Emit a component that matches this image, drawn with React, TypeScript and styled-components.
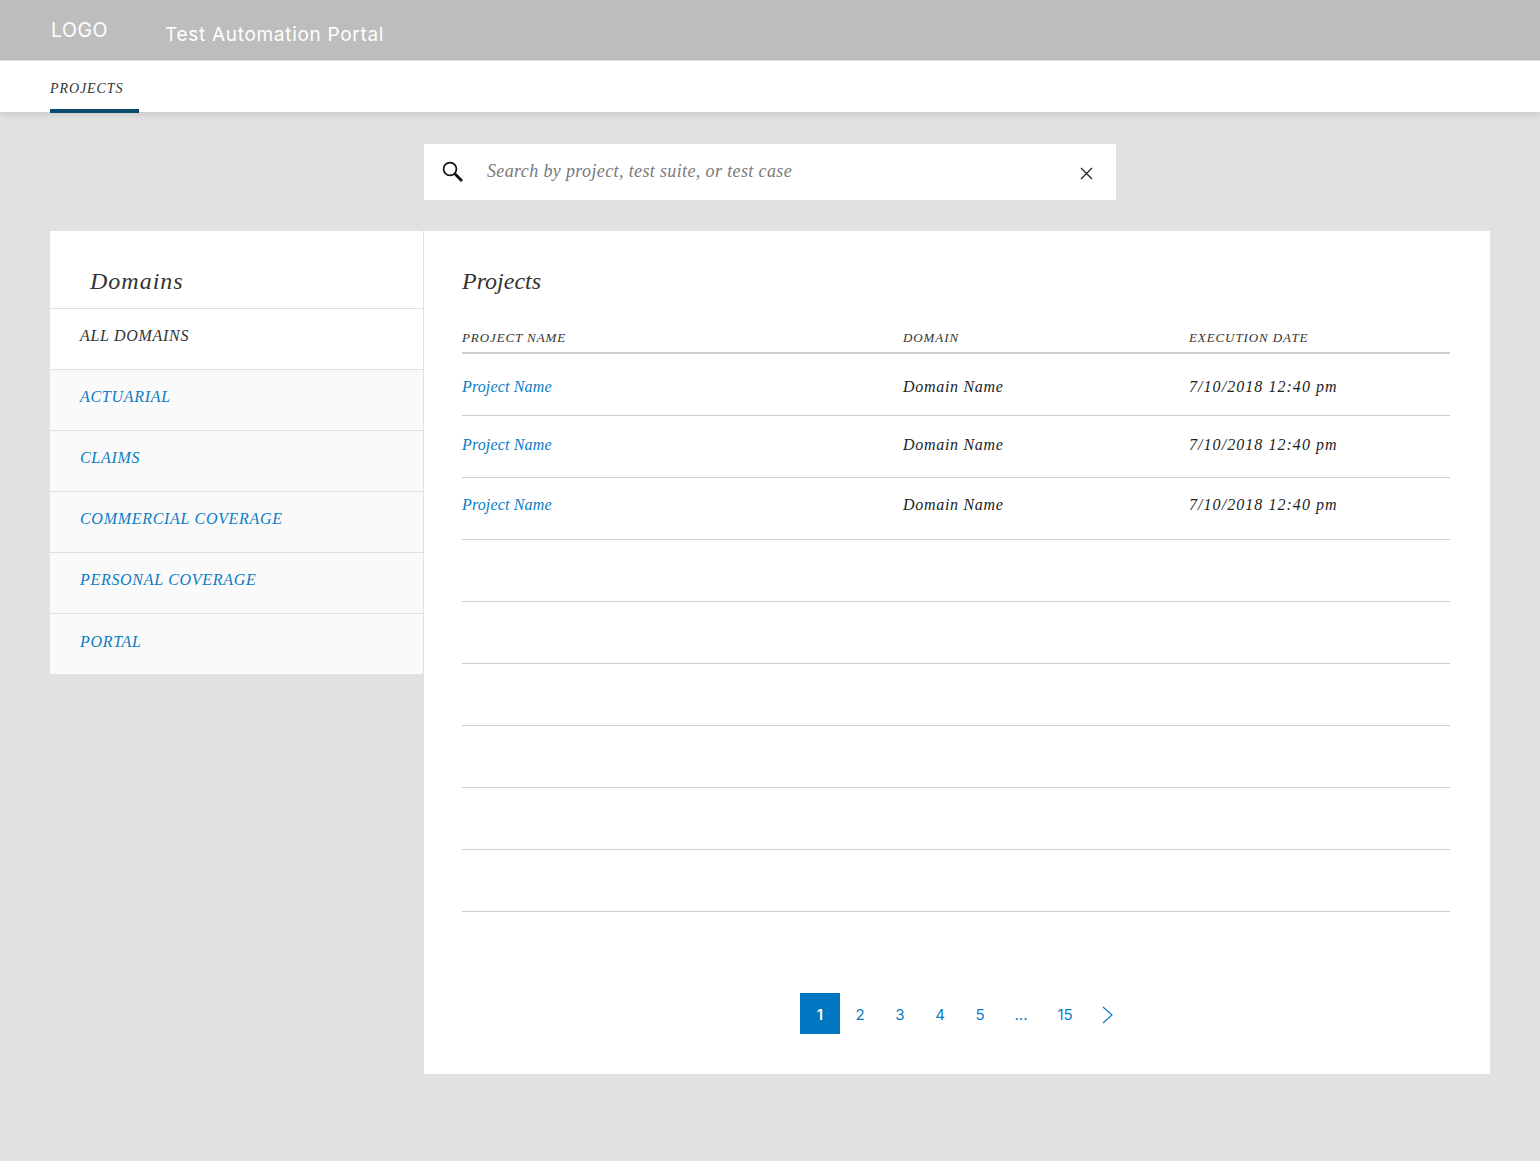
import React from "react";
import styled, { createGlobalStyle } from "styled-components";

const hand = `"Liberation Serif", serif`;
const sans = `Inter, Lato, sans-serif`;

const Global = createGlobalStyle`
  html, body { margin: 0; padding: 0; background: #e1e1e1; }
  * { box-sizing: border-box; }
`;
const Page = styled.div`
  min-height: 1161px;
  background: #e1e1e1;
  display: flex;
  flex-direction: column;
`;
const Header = styled.header`
  height: 61px;
  background: #bdbdbd;
  border-bottom: 1px solid #e4e4e4;
  display: flex;
  padding-left: 51px;
  color: #fff;
  font-family: ${sans};
`;
const Logo = styled.div`
  width: 114px;
  padding-top: 18px;
  font-size: 19.5px;
  line-height: 24px;
  letter-spacing: 0.5px;
`;
const PortalName = styled.div`
  padding-top: 23px;
  font-size: 19px;
  line-height: 24px;
  letter-spacing: 0.7px;
`;
const Nav = styled.nav`
  height: 51px;
  background: #fff;
  padding-left: 50px;
  box-shadow: 0 2px 6px rgba(0, 0, 0, 0.12);
  display: flex;
`;
const Tab = styled.div`
  width: 89px;
  height: 52px;
  border-bottom: 4px solid #0b4a6f;
  padding-top: 19px;
  font-family: ${hand};
  font-style: italic;
  font-size: 14px;
  line-height: 18px;
  letter-spacing: 0.9px;
  color: #333;
`;
const SearchBar = styled.div`
  align-self: flex-start;
  margin: 32px 0 31px 424px;
  width: 692px;
  height: 56px;
  background: #fff;
  display: flex;
  align-items: center;
  padding: 0 23px 0 18px;
`;
const SearchInput = styled.input`
  flex: 1;
  border: 0;
  outline: 0;
  margin: 0 0 2px 23px;
  height: 30px;
  padding: 0;
  font-family: ${hand};
  font-style: italic;
  font-size: 18px;
  letter-spacing: 0.37px;
  color: #333;
  &::placeholder { color: #7a7a7a; opacity: 1; }
`;
const CloseIcon = styled.svg`
  display: block;
  flex: none;
  margin-top: 2px;
`;
const Main = styled.main`
  display: grid;
  grid-template-columns: 374px 1066px;
  margin: 0 50px;
  align-items: start;
`;
const Side = styled.aside`
  background: #fff;
  border-right: 1px solid #e0e0e0;
`;
const SideTitle = styled.h2`
  margin: 0;
  padding: 35px 0 12px 40px;
  font: italic 400 24px/30px ${hand};
  letter-spacing: 1px;
  color: #333;
  border-bottom: 1px solid #e0e0e0;
`;
const SideRow = styled.div<{ $active?: boolean }>`
  height: 61px;
  padding: 18px 0 0 30px;
  font: italic 400 16px/18px ${hand};
  letter-spacing: 0.7px;
  color: ${(p) => (p.$active ? "#333" : "#0a7cc4")};
  background: ${(p) => (p.$active ? "#fff" : "#fafafa")};
  border-bottom: 1px solid #e0e0e0;
  &:last-child { border-bottom: 0; height: 60px; padding-top: 19px; }
`;
const Content = styled.section`
  background: #fff;
  height: 843px;
  padding: 35px 40px 0 38px;
  display: flex;
  flex-direction: column;
`;
const Title = styled.h1`
  margin: 0;
  font: italic 400 24px/30px ${hand};
  color: #333;
`;
const Cols = styled.div`
  display: grid;
  grid-template-columns: 441px 286px 1fr;
`;
const TableHead = styled(Cols)`
  padding: 34px 0 6px;
  border-bottom: 2px solid #cfcfcf;
  font: italic 400 13px/16px ${hand};
  letter-spacing: 0.9px;
  color: #333;
`;
const Row = styled(Cols)<{ $top: number }>`
  height: 62px;
  padding-top: ${(p) => p.$top}px;
  border-bottom: 1px solid #cfcfcf;
  font: italic 400 16px/18px ${hand};
  color: #222;
`;
const ProjectLink = styled.a`
  color: #0a7cc4;
  letter-spacing: 0.15px;
`;
const DomainCell = styled.div`
  letter-spacing: 0.7px;
`;
const DateCell = styled.div`
  letter-spacing: 1.05px;
`;
const Pager = styled.div`
  margin-top: 81px;
  margin-left: 338px;
  display: flex;
  align-items: center;
  font-family: ${sans};
  font-size: 15px;
  color: #0a7cc4;
`;
const PageItem = styled.div<{ $active?: boolean; $w?: number }>`
  width: ${(p) => p.$w ?? 40}px;
  height: 41px;
  padding-top: 2px;
  display: flex;
  align-items: center;
  justify-content: center;
  background: ${(p) => (p.$active ? "#0077c0" : "transparent")};
  color: ${(p) => (p.$active ? "#fff" : "inherit")};
  font-weight: ${(p) => (p.$active ? 600 : 400)};
`;
const Icon = styled.svg`
  display: block;
  flex: none;
`;
const ChevronIcon = styled(Icon)`
  margin-right: 2px;
`;

const domains = ["ACTUARIAL", "CLAIMS", "COMMERCIAL COVERAGE", "PERSONAL COVERAGE", "PORTAL"];
const tops = [24, 20, 18];

export default function App() {
  return (
    <Page>
      <Global />
      <Header>
        <Logo>LOGO</Logo>
        <PortalName>Test Automation Portal</PortalName>
      </Header>
      <Nav>
        <Tab>PROJECTS</Tab>
      </Nav>
      <SearchBar>
        <Icon width="22" height="22" viewBox="0 0 22 22" fill="none" stroke="#111">
          <circle cx="8" cy="8" r="6.4" strokeWidth="1.7" />
          <path d="M12.6 12.6 20 20" strokeWidth="2.8" />
        </Icon>
        <SearchInput placeholder="Search by project, test suite, or test case" />
        <CloseIcon width="13" height="13" viewBox="0 0 13 13" fill="none" stroke="#222" strokeWidth="1.3">
          <path d="M1 1l11 11M12 1 1 12" />
        </CloseIcon>
      </SearchBar>
      <Main>
        <Side>
          <SideTitle>Domains</SideTitle>
          <SideRow $active>ALL DOMAINS</SideRow>
          {domains.map((d) => (
            <SideRow key={d}>{d}</SideRow>
          ))}
        </Side>
        <Content>
          <Title>Projects</Title>
          <TableHead>
            <div>PROJECT NAME</div>
            <div>DOMAIN</div>
            <div>EXECUTION DATE</div>
          </TableHead>
          {tops.map((t, i) => (
            <Row key={i} $top={t}>
              <div>
                <ProjectLink>Project Name</ProjectLink>
              </div>
              <DomainCell>Domain Name</DomainCell>
              <DateCell>7/10/2018 12:40 pm</DateCell>
            </Row>
          ))}
          {[0, 1, 2, 3, 4, 5].map((i) => (
            <Row key={i} $top={0} />
          ))}
          <Pager>
            <PageItem $active>1</PageItem>
            <PageItem>2</PageItem>
            <PageItem>3</PageItem>
            <PageItem>4</PageItem>
            <PageItem>5</PageItem>
            <PageItem $w={42}>...</PageItem>
            <PageItem $w={46}>15</PageItem>
            <PageItem $w={40}>
              <ChevronIcon width="11" height="18" viewBox="0 0 11 18" fill="none" stroke="#0a7cc4" strokeWidth="1.2">
                <path d="M1 1l9 8-9 8" />
              </ChevronIcon>
            </PageItem>
          </Pager>
        </Content>
      </Main>
    </Page>
  );
}
